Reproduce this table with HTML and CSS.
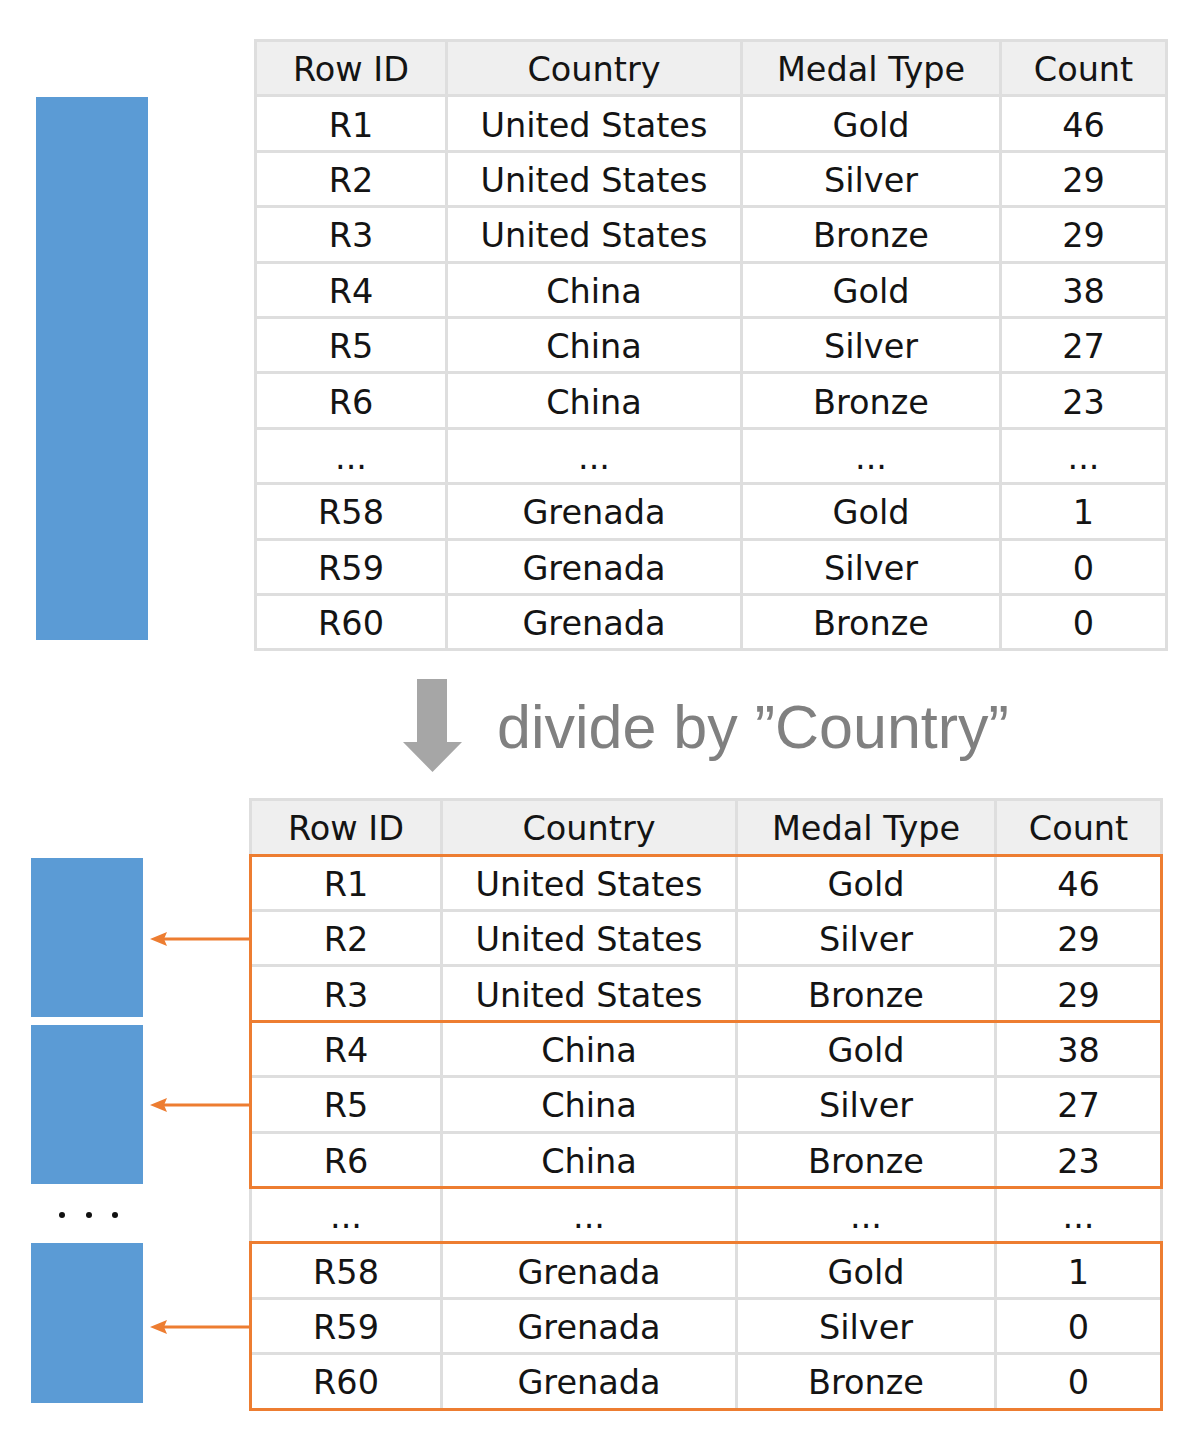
FILE: index.html
```html
<!DOCTYPE html>
<html lang="en">
<head>
<meta charset="utf-8">
<title>Divide by Country</title>
<link rel="stylesheet" href="styles.css">
</head>
<body>
<div class="page">
  <section class="stage stage-top">
    <div class="bar-col"><div class="bar bar-tall"></div></div>
    <div class="table">
      <div class="row head"><div class="cell">Row ID</div><div class="cell">Country</div><div class="cell">Medal Type</div><div class="cell">Count</div></div>
      <div class="row"><div class="cell">R1</div><div class="cell">United States</div><div class="cell">Gold</div><div class="cell">46</div></div>
      <div class="row"><div class="cell">R2</div><div class="cell">United States</div><div class="cell">Silver</div><div class="cell">29</div></div>
      <div class="row"><div class="cell">R3</div><div class="cell">United States</div><div class="cell">Bronze</div><div class="cell">29</div></div>
      <div class="row"><div class="cell">R4</div><div class="cell">China</div><div class="cell">Gold</div><div class="cell">38</div></div>
      <div class="row"><div class="cell">R5</div><div class="cell">China</div><div class="cell">Silver</div><div class="cell">27</div></div>
      <div class="row"><div class="cell">R6</div><div class="cell">China</div><div class="cell">Bronze</div><div class="cell">23</div></div>
      <div class="row"><div class="cell">...</div><div class="cell">...</div><div class="cell">...</div><div class="cell">...</div></div>
      <div class="row"><div class="cell">R58</div><div class="cell">Grenada</div><div class="cell">Gold</div><div class="cell">1</div></div>
      <div class="row"><div class="cell">R59</div><div class="cell">Grenada</div><div class="cell">Silver</div><div class="cell">0</div></div>
      <div class="row"><div class="cell">R60</div><div class="cell">Grenada</div><div class="cell">Bronze</div><div class="cell">0</div></div>
    </div>
  </section>

  <div class="divide">
    <svg class="down-arrow" width="59" height="93" viewBox="0 0 59 93" aria-hidden="true">
      <polygon points="14,0 44,0 44,63 59,63 29.5,93 0,63 14,63" fill="#a6a6a6"/>
    </svg>
    <span class="divide-label">divide by ”Country”</span>
  </div>

  <section class="stage stage-bottom">
    <div class="block-col">
      <div class="block"></div>
      <div class="block block-second"></div>
      <div class="dots"><i></i><i></i><i></i></div>
      <div class="block block-last"></div>
    </div>
    <div class="table">
      <div class="row head"><div class="cell">Row ID</div><div class="cell">Country</div><div class="cell">Medal Type</div><div class="cell">Count</div></div>
      <div class="group">
        <svg class="link-arrow" width="104" height="16" viewBox="0 0 104 16" aria-hidden="true">
          <line x1="14" y1="8" x2="104" y2="8" stroke="#ed7d31" stroke-width="3"/>
          <polygon points="2,8 19,1 16,8 19,15" fill="#ed7d31"/>
        </svg>
        <div class="row"><div class="cell">R1</div><div class="cell">United States</div><div class="cell">Gold</div><div class="cell">46</div></div>
        <div class="row"><div class="cell">R2</div><div class="cell">United States</div><div class="cell">Silver</div><div class="cell">29</div></div>
        <div class="row"><div class="cell">R3</div><div class="cell">United States</div><div class="cell">Bronze</div><div class="cell">29</div></div>
      </div>
      <div class="group">
        <svg class="link-arrow" width="104" height="16" viewBox="0 0 104 16" aria-hidden="true">
          <line x1="14" y1="8" x2="104" y2="8" stroke="#ed7d31" stroke-width="3"/>
          <polygon points="2,8 19,1 16,8 19,15" fill="#ed7d31"/>
        </svg>
        <div class="row"><div class="cell">R4</div><div class="cell">China</div><div class="cell">Gold</div><div class="cell">38</div></div>
        <div class="row"><div class="cell">R5</div><div class="cell">China</div><div class="cell">Silver</div><div class="cell">27</div></div>
        <div class="row"><div class="cell">R6</div><div class="cell">China</div><div class="cell">Bronze</div><div class="cell">23</div></div>
      </div>
      <div class="row"><div class="cell">...</div><div class="cell">...</div><div class="cell">...</div><div class="cell">...</div></div>
      <div class="group">
        <svg class="link-arrow" width="104" height="16" viewBox="0 0 104 16" aria-hidden="true">
          <line x1="14" y1="8" x2="104" y2="8" stroke="#ed7d31" stroke-width="3"/>
          <polygon points="2,8 19,1 16,8 19,15" fill="#ed7d31"/>
        </svg>
        <div class="row"><div class="cell">R58</div><div class="cell">Grenada</div><div class="cell">Gold</div><div class="cell">1</div></div>
        <div class="row"><div class="cell">R59</div><div class="cell">Grenada</div><div class="cell">Silver</div><div class="cell">0</div></div>
        <div class="row"><div class="cell">R60</div><div class="cell">Grenada</div><div class="cell">Bronze</div><div class="cell">0</div></div>
      </div>
    </div>
  </section>
</div>
</body>
</html>
```

FILE: styles.css
```css
* { box-sizing: border-box; }

html, body {
  margin: 0;
  padding: 0;
  background: #ffffff;
}

.page {
  width: 1200px;
  height: 1431px;
  overflow: hidden;
}

.stage {
  display: flex;
  align-items: flex-start;
}

.stage-top {
  padding-top: 39px;
}

.bar-col {
  margin-left: 36px;
  padding-top: 58px;
}

.bar {
  width: 112px;
  height: 543px;
  background: #5b9bd5;
}

.stage-top .table {
  margin-left: 106px;
}

/* table */
.table {
  display: flex;
  flex-direction: column;
  gap: 3px;
  padding: 3px;
  background: #dedede;
}

.row {
  display: grid;
  grid-template-columns: 188px 292px 256px 163px;
  column-gap: 3px;
}

.cell {
  height: 52.4px;
  padding-top: 3px;
  background: #ffffff;
  display: flex;
  align-items: center;
  justify-content: center;
  font-family: "DejaVu Sans", Verdana, sans-serif;
  font-size: 33.5px;
  color: #141414;
  white-space: nowrap;
}

.head .cell {
  background: #efefef;
}

/* divider */
.divide {
  height: 147px;
  display: flex;
  align-items: flex-start;
  padding-top: 28px;
}

.down-arrow {
  display: block;
  margin-left: 403px;
  flex: none;
}

.divide-label {
  margin-left: 35px;
  margin-top: 13px;
  font-family: "Liberation Sans", Arial, sans-serif;
  font-size: 61px;
  line-height: 70px;
  color: #808080;
  white-space: nowrap;
}

/* bottom */
.block-col {
  margin-left: 31px;
  width: 112px;
  padding-top: 60px;
  display: flex;
  flex-direction: column;
}

.block {
  width: 112px;
  height: 159px;
  background: #5b9bd5;
}

.block-second {
  margin-top: 8px;
}

.block-last {
  height: 160px;
}

.dots {
  display: flex;
  gap: 20.5px;
  padding-left: 28px;
  margin-top: 28px;
  margin-bottom: 25px;
}

.dots i {
  display: block;
  width: 6px;
  height: 6px;
  border-radius: 50%;
  background: #111111;
}

.stage-bottom .table {
  margin-left: 106px;
}

.group {
  position: relative;
  display: flex;
  flex-direction: column;
  gap: 3px;
}

.group::after {
  content: "";
  position: absolute;
  top: -3px;
  left: -3px;
  right: -3px;
  bottom: -3px;
  border: 3px solid #ed7d31;
  pointer-events: none;
}

.link-arrow {
  position: absolute;
  left: -104px;
  top: calc(50% - 7px);
}
```
